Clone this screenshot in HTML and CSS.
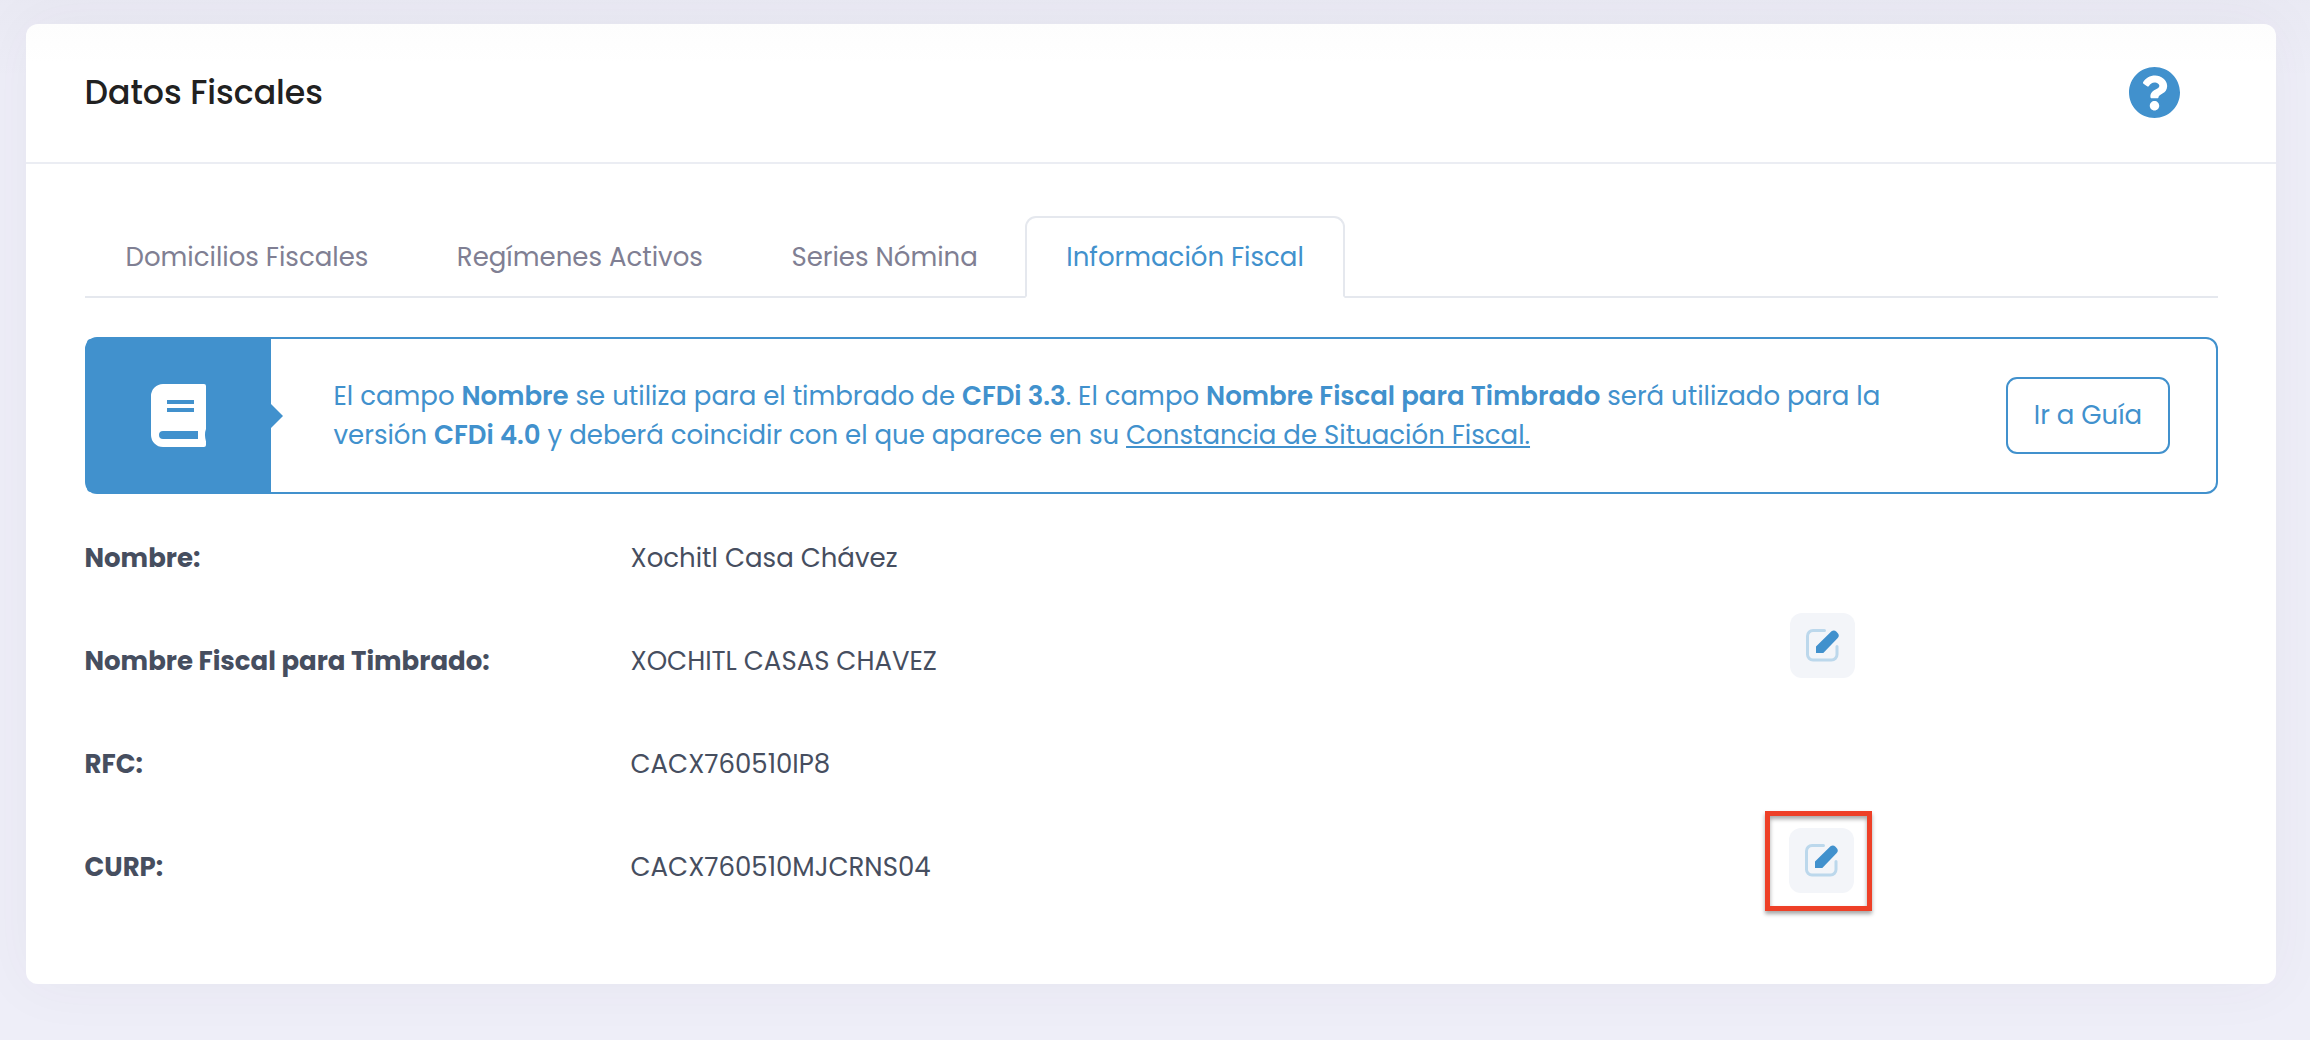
FILE: index.html
```html
<!DOCTYPE html>
<html lang="es">
<head>
    <meta charset="UTF-8">
    <meta name="viewport" content="width=device-width, initial-scale=1.0">
    <title>Datos Fiscales</title>
    <link rel="stylesheet" href="styles.css">
</head>
<body>

    <div class="card">
        <div class="card-header">
            <h3 class="card-title">Datos Fiscales</h3>
            <a href="#" class="help-link" aria-label="Ayuda">
                <svg viewBox="8 8 496 496"><path d="M504 256c0 136.997-111.043 248-248 248S8 392.997 8 256C8 119.083 119.043 8 256 8s248 111.083 248 248zM262.655 90c-54.497 0-89.255 22.957-116.549 63.758-3.536 5.286-2.353 12.415 2.715 16.258l34.699 26.31c5.205 3.947 12.621 3.008 16.665-2.122 17.864-22.658 30.113-35.797 57.303-35.797 20.429 0 45.698 13.148 45.698 32.958 0 14.976-12.363 22.667-32.534 33.976C247.128 238.528 216 254.941 216 296v4c0 6.627 5.373 12 12 12h56c6.627 0 12-5.373 12-12v-1.333c0-28.462 83.186-29.647 83.186-106.667 0-58.002-60.165-102-116.531-102zM256 338c-25.365 0-46 20.635-46 46 0 25.364 20.635 46 46 46s46-20.636 46-46c0-25.365-20.635-46-46-46z"/></svg>
            </a>
        </div>

        <div class="card-body">
            <ul class="nav-tabs">
                <li><a href="#" class="nav-link">Domicilios Fiscales</a></li>
                <li><a href="#" class="nav-link">Regímenes Activos</a></li>
                <li><a href="#" class="nav-link">Series Nómina</a></li>
                <li><a href="#" class="nav-link active">Información Fiscal</a></li>
            </ul>

            <div class="alert">
                <div class="alert-icon">
                    <svg viewBox="0 0 56 63">
                        <path fill="#fff" fill-rule="evenodd" d="M12 0H53a2 2 0 0 1 2 2V45q-2 5 0 12.500v3.500a2 2 0 0 1-2 2H12A12 12 0 0 1 0 51V12A12 12 0 0 1 12 0zM16 16V20H43V16zM16 24V28H43V24zM12 47a4 4 0 0 0 0 8H47V47z"/>
                    </svg>
                </div>
                <div class="alert-text">
                    El campo <b>Nombre</b> se utiliza para el timbrado de <b>CFDi 3.3</b>. El campo <b>Nombre Fiscal para Timbrado</b> será utilizado para la<br>
                    versión <b>CFDi 4.0</b> y deberá coincidir con el que aparece en su <a href="#">Constancia de Situación Fiscal.</a>
                </div>
                <button type="button" class="btn-guia">Ir a Guía</button>
            </div>

            <div class="row">
                <div class="label">Nombre:</div>
                <div class="value">Xochitl Casa Chávez</div>
            </div>
            <div class="row">
                <div class="label">Nombre Fiscal para Timbrado:</div>
                <div class="value">XOCHITL CASAS CHAVEZ</div>
                <button type="button" class="btn-edit" aria-label="Editar nombre fiscal">
                    <svg viewBox="0 0 33 33">
                        <path class="frame" d="M18.500 1.500H7A5.500 5.500 0 0 0 1.500 7V25.500A5.500 5.500 0 0 0 7 31H25.500A5.500 5.500 0 0 0 31 25.500V17.500"/>
                        <path class="pencil" d="M10 17.500 25.500 2.300Q28 0.300 30.500 2.700L32 4.500Q33.800 7 31.500 9.300L17.300 24H10z"/>
                    </svg>
                </button>
            </div>
            <div class="row">
                <div class="label">RFC:</div>
                <div class="value">CACX760510IP8</div>
            </div>
            <div class="row">
                <div class="label">CURP:</div>
                <div class="value">CACX760510MJCRNS04</div>
                <div class="highlight">
                    <button type="button" class="btn-edit" aria-label="Editar CURP">
                        <svg viewBox="0 0 33 33">
                            <path class="frame" d="M18.500 1.500H7A5.500 5.500 0 0 0 1.500 7V25.500A5.500 5.500 0 0 0 7 31H25.500A5.500 5.500 0 0 0 31 25.500V17.500"/>
                            <path class="pencil" d="M10 17.500 25.500 2.300Q28 0.300 30.500 2.700L32 4.500Q33.800 7 31.500 9.300L17.300 24H10z"/>
                        </svg>
                    </button>
                </div>
            </div>
        </div>
    </div>

</body>
</html>
```
FILE: styles.css
```css
* {
    box-sizing: border-box;
}

body {
    margin: 0;
    padding: 24px 34px 56px 26px;
    min-height: 100vh;
    font-family: Poppins, Inter, 'Open Sans', sans-serif;
    font-size: 26px;
    line-height: 39px;
    color: #464e5f;
    background: linear-gradient(rgba(50, 50, 60, 0.025), rgba(50, 50, 60, 0) 80px) #eeeef8;
}

button {
    font: inherit;
    cursor: pointer;
}

.card {
    height: 960px;
    background: linear-gradient(#fdfdfd, #fff 40px);
    border-radius: 12px;
    box-shadow: 0 0 60px rgba(72, 63, 85, 0.05);
}

.card-header {
    display: flex;
    align-items: center;
    justify-content: space-between;
    height: 140px;
    padding: 0 96px 2px 58.5px;
    border-bottom: 2px solid #ebedf3;
}

.card-title {
    margin: 0;
    padding-top: 1px;
    font-size: 33.15px;
    font-weight: 500;
    color: #212121;
}

.help-link {
    width: 51px;
    height: 51px;
}

.help-link svg {
    display: block;
    fill: #4191cd;
}

.card-body {
    padding: 52px 58px 52px 58.5px;
}

/* Tabs */
.nav-tabs {
    display: flex;
    gap: 6.5px;
    height: 82px;
    margin: 0 0 39px;
    padding: 0;
    list-style: none;
    border-bottom: 2px solid #e5e8ee;
}

.nav-link {
    display: block;
    height: 82px;
    padding: 20px 39px;
    border: 2px solid transparent;
    border-radius: 11px 11px 0 0;
    color: #807f93;
    text-decoration: none;
    white-space: nowrap;
}

.nav-link.active {
    color: #4191cd;
    background: #fff;
    border-color: #e5e8ee #e5e8ee #fff;
}

/* Notice */
.alert {
    display: flex;
    align-items: center;
    height: 157px;
    margin-bottom: 45px;
    border: 2px solid #4191cd;
    border-radius: 12px;
    color: #4191cd;
}

.alert-icon {
    position: relative;
    display: flex;
    align-items: center;
    align-self: stretch;
    width: 184px;
    padding: 0 0 1px 64.5px;
    background: #4191cd;
    border-radius: 4px 0 0 4px;
}

.alert-icon svg {
    width: 56px;
    height: 63px;
}

.alert-icon::after {
    content: "";
    position: absolute;
    left: 100%;
    top: 65px;
    border: 12px solid transparent;
    border-left-color: #4191cd;
    border-right: 0;
}

.alert-text {
    flex: 1;
    padding-left: 63px;
    white-space: nowrap;
}

.alert b {
    font-weight: 600;
}

.alert a {
    color: inherit;
}

.btn-guia {
    width: 164px;
    height: 77px;
    margin-right: 46px;
    padding: 0;
    border: 2px solid #4191cd;
    border-radius: 11px;
    background: #fff;
    color: #4191cd;
}

/* Data rows */
.row {
    display: flex;
    height: 103px;
}

.label {
    width: 546px;
    font-weight: 700;
}

.value {
    width: 1159.5px;
}

.btn-edit {
    display: flex;
    flex-shrink: 0;
    align-items: center;
    justify-content: center;
    width: 65px;
    height: 65px;
    margin-top: -29px;
    padding: 0;
    border: 0;
    border-radius: 12px;
    background: #f3f5f9;
}

.btn-edit svg {
    width: 33px;
    height: 33px;
}

.frame {
    fill: none;
    stroke: #bcd8ec;
    stroke-width: 3;
    stroke-linecap: round;
}

.pencil {
    fill: #4191cd;
}

.highlight {
    width: 107px;
    height: 100px;
    margin: -37px 0 0 -25px;
    padding: 12px 19px;
    border: 5px solid #ee4027;
    box-shadow: 0 3px 4px rgba(0, 0, 0, 0.35), inset 0 3px 4px rgba(0, 0, 0, 0.35);
}

.highlight .btn-edit {
    margin: 0;
}
```
